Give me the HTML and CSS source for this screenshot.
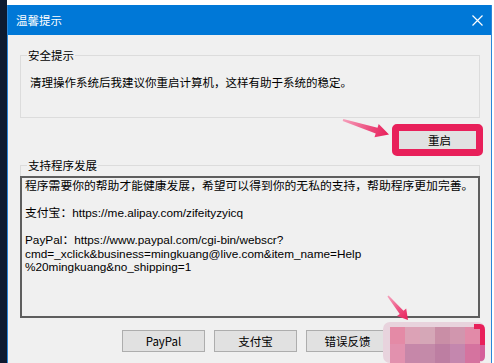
FILE: index.html
```html
<!DOCTYPE html>
<html lang="zh-CN">
<head>
    <meta charset="UTF-8">
    <title>温馨提示</title>
    <link rel="stylesheet" href="styles.css">
</head>
<body>

<div class="desk"></div>

<div class="win">
    <div class="titlebar">
        <span class="title">温馨提示</span>
        <svg class="close" width="11" height="11" viewBox="0 0 11 11">
            <path d="M0.5 0.5 L10.5 10.5 M10.5 0.5 L0.5 10.5" stroke="#fff" stroke-width="1.2" fill="none"/>
        </svg>
    </div>

    <div class="content">
        <fieldset class="group">
            <legend>安全提示</legend>
            <p class="tip">清理操作系统后我建议你重启计算机，这样有助于系统的稳定。</p>
        </fieldset>

        <div class="restart-row">
            <button class="btn btn-restart">重启</button>
        </div>

        <fieldset class="group group-support">
            <legend>支持程序发展</legend>
            <div class="memo">
                <p>程序需要你的帮助才能健康发展，希望可以得到你的无私的支持，帮助程序更加完善。</p>
                <p>支付宝：https://me.alipay.com/zifeityzyicq</p>
                <p>PayPal：https://www.paypal.com/cgi-bin/webscr?<br>cmd=_xclick&amp;business=mingkuang@live.com&amp;item_name=Help<br>%20mingkuang&amp;no_shipping=1</p>
            </div>
        </fieldset>

        <div class="btn-row">
            <button class="btn">PayPal</button>
            <button class="btn">支付宝</button>
            <button class="btn">错误反馈</button>
            <button class="btn">关闭</button>
        </div>
    </div>
</div>

<!-- annotation layer: arrows and the blurred corner -->
<svg class="marks" width="494" height="363" viewBox="0 0 494 363">
    <defs>
        <linearGradient id="arrow1" gradientUnits="userSpaceOnUse" x1="343" y1="120" x2="389" y2="134">
            <stop offset="0" stop-color="#f5a0bb"/>
            <stop offset="0.6" stop-color="#ec4a7c"/>
            <stop offset="1" stop-color="#e8205a"/>
        </linearGradient>
        <linearGradient id="arrow2" gradientUnits="userSpaceOnUse" x1="388" y1="296" x2="408" y2="320">
            <stop offset="0" stop-color="#f5a0bb"/>
            <stop offset="0.6" stop-color="#ec4a7c"/>
            <stop offset="1" stop-color="#e8205a"/>
        </linearGradient>
    </defs>
    <polygon fill="url(#arrow1)" points="343.3,119 377.5,127.7 378.7,123.9 389,134.5 374.5,137.3 375.7,133.5 342.7,121"/>
    <polygon fill="url(#arrow2)" points="388.6,295.5 403.5,310.7 406.2,308.5 408,320 397,316.1 399.7,313.9 387.4,296.5"/>

    <rect x="383" y="322" width="102" height="41" rx="7" fill="#e8d3dd"/>
    <rect x="390" y="327" width="15" height="17" fill="#e48aa6"/>
    <rect x="405" y="327" width="15" height="17" fill="#dca2b6"/>
    <rect x="420" y="327" width="15" height="17" fill="#d5a7b7"/>
    <rect x="435" y="327" width="15" height="17" fill="#c98ea6"/>
    <rect x="450" y="327" width="15" height="17" fill="#d196ae"/>
    <rect x="465" y="327" width="15" height="17" fill="#e28aa8"/>
    <rect x="390" y="344" width="15" height="19" fill="#e291ae"/>
    <rect x="405" y="344" width="15" height="19" fill="#c687a9"/>
    <rect x="420" y="344" width="15" height="19" fill="#c48aa9"/>
    <rect x="435" y="344" width="15" height="19" fill="#bd7ea2"/>
    <rect x="450" y="344" width="15" height="19" fill="#c487ae"/>
    <rect x="465" y="344" width="15" height="19" fill="#d5739f"/>
    <path d="M474 324 L480 324 Q485 324 485 330 L485 345 L480 345 L480 329 L474 329 Z" fill="#e8205a"/>
    <path d="M480 345 L485 345 L485 356 Q485 361 481 361 L480 361 Z" fill="#d4609a"/>
</svg>

</body>
</html>
```

FILE: styles.css
```css
* {
    box-sizing: border-box;
}
body {
    margin: 0;
    height: 363px;
    overflow: hidden;
    display: flex;
    background: #fff;
    font-family: "Noto Sans CJK SC", sans-serif;
    font-size: 11.5px;
    color: #000;
}
.desk {
    width: 7px;
    flex: none;
    background: #0d1a30;
}
.win {
    width: 485px;
    flex: none;
    margin-top: 5px;
    border-left: 1px solid #2b86d9;
    border-right: 1px solid #2b86d9;
    background: #f0f0f0;
}
.titlebar {
    height: 30px;
    background: #0078d7;
    color: #fff;
    display: flex;
    align-items: center;
    justify-content: space-between;
    padding: 0 8px;
    font-size: 11.5px;
}
.close {
    display: block;
}
.content {
    padding: 0 10px 0 12px;
}
.group {
    margin: 12px 1px 0 0;
    padding: 0;
    border: 1px solid #dcdcdc;
    min-width: 0;
}
.group legend {
    margin-left: 6px;
    padding: 0 1px;
    line-height: 17px;
}
.tip {
    margin: 10px 0 26px 9px;
    line-height: 17px;
}
.restart-row {
    display: flex;
    justify-content: flex-end;
    margin-top: 10px;
}
.btn {
    width: 83px;
    height: 22px;
    padding: 0;
    background: #e1e1e1;
    border: 1px solid #adadad;
    font-family: inherit;
    font-size: 11.5px;
    color: #000;
}
.btn-restart {
    position: relative;
    height: 23px;
}
.btn-restart::after {
    content: "";
    position: absolute;
    top: -5px;
    bottom: -6px;
    left: -7px;
    right: -3px;
    border: 7px solid #e8205a;
    border-radius: 5px;
}
.group-support {
    margin-top: 6px;
}
.memo {
    margin: 2px -1px -1px;
    height: 142px;
    padding: 2px 3px;
    border: 2px solid #5e5e5e;
    background: #f0f0f0;
    font-family: "Liberation Sans", "Noto Sans CJK SC", sans-serif;
    font-size: 11.8px;
    line-height: 13.5px;
}
.memo p {
    margin: 0 0 13.5px;
    white-space: nowrap;
}
.btn-row {
    display: flex;
    justify-content: flex-end;
    gap: 9px;
    margin-top: 12px;
}
.marks {
    position: absolute;
    left: 0;
    top: 0;
    pointer-events: none;
}
```
